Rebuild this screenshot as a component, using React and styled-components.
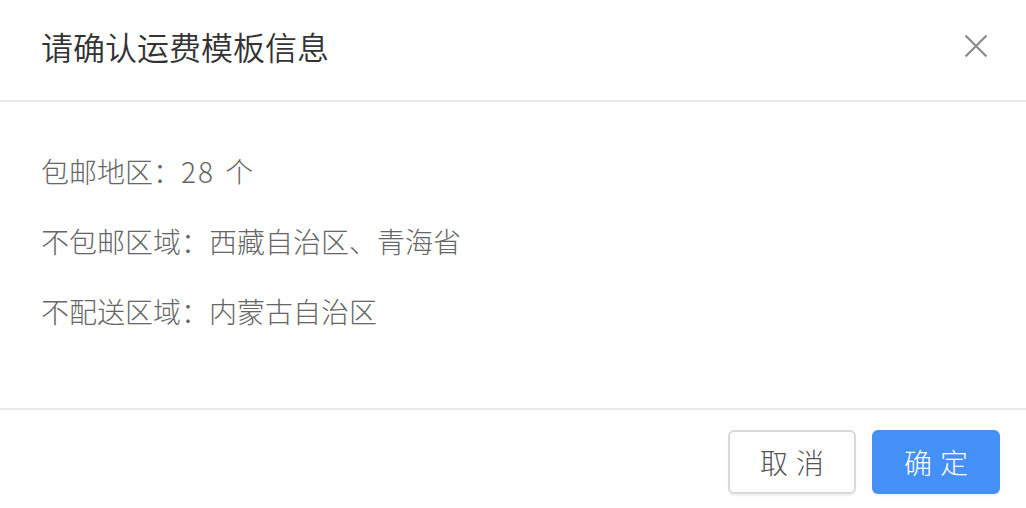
import React from 'react'
import styled, { createGlobalStyle } from 'styled-components'

const GlobalStyle = createGlobalStyle`
  html, body {
    margin: 0;
    padding: 0;
    background: #fff;
  }
  body {
    font-family: "Noto Sans CJK SC", "Noto Sans", sans-serif;
  }
`

const Dialog = styled.div`
  width: 1026px;
  height: 508px;
  background: #fff;
  display: flex;
  flex-direction: column;
`

const Header = styled.div`
  height: 102px;
  display: flex;
  align-items: center;
  justify-content: space-between;
  padding: 0 26px 8px 41px;
  box-sizing: border-box;
  border-bottom: 2px solid #e8e8e8;
`

const Title = styled.h1`
  margin: 0;
  font-size: 32px;
  font-weight: 350;
  color: #333;
  line-height: 1;
`

const CloseButton = styled.button`
  width: 48px;
  height: 48px;
  padding: 0;
  border: none;
  background: none;
  display: flex;
  align-items: center;
  justify-content: center;
  cursor: pointer;
`

const Body = styled.div`
  padding: 34px 41px 62px;
  border-bottom: 2px solid #e8e8e8;
`

const Line = styled.div`
  font-size: 28px;
  font-weight: 300;
  line-height: 70px;
  color: #666;
  white-space: nowrap;
`

const Count = styled.span`
  letter-spacing: 2px;
  margin-right: 4px;
`

const Footer = styled.div`
  flex: 1;
  display: flex;
  justify-content: flex-end;
  align-items: flex-start;
  gap: 16px;
  padding: 20px 26px 0 0;
`

const Button = styled.button`
  width: 128px;
  height: 64px;
  border-radius: 6px;
  box-sizing: border-box;
  font-family: inherit;
  font-size: 28px;
  font-weight: 300;
  letter-spacing: 8px;
  text-indent: 8px;
  cursor: pointer;
  border: ${p => (p.primary ? 'none' : '2px solid #d9d9d9')};
  background: ${p => (p.primary ? '#4590f6' : '#fff')};
  color: ${p => (p.primary ? '#fff' : '#555')};
  box-shadow: 0 2px 2px rgba(0, 0, 0, 0.06);
`

const CloseIcon = () => (
  <svg width="24" height="24" viewBox="0 0 24 24">
    <path d="M1.5 1.5 L22.5 22.5 M22.5 1.5 L1.5 22.5" stroke="#8a8a8a" strokeWidth="2.2" fill="none" />
  </svg>
)

const App = () => (
  <>
    <GlobalStyle />
    <Dialog>
      <Header>
        <Title>请确认运费模板信息</Title>
        <CloseButton aria-label="关闭">
          <CloseIcon />
        </CloseButton>
      </Header>
      <Body>
        <Line>包邮地区：<Count>28</Count> 个</Line>
        <Line>不包邮区域：西藏自治区、青海省</Line>
        <Line>不配送区域：内蒙古自治区</Line>
      </Body>
      <Footer>
        <Button>取消</Button>
        <Button primary>确定</Button>
      </Footer>
    </Dialog>
  </>
)

export default App
